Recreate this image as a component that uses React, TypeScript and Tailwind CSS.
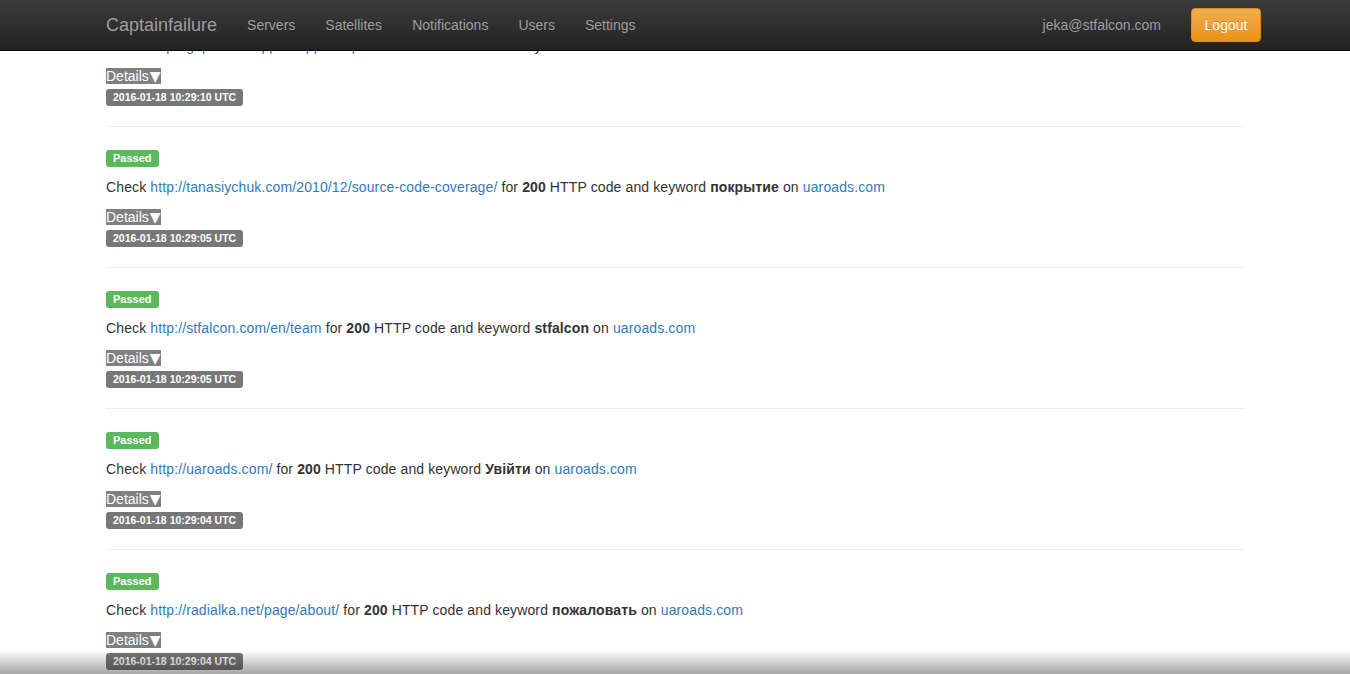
import React from "react";

type Item = {
  url: string;
  keyword: string;
  time: string;
};

const items: Item[] = [
  { url: "http://gopro.ua/support/apps/help/", keyword: "uaroads", time: "2016-01-18 10:29:10 UTC" },
  { url: "http://tanasiychuk.com/2010/12/source-code-coverage/", keyword: "покрытие", time: "2016-01-18 10:29:05 UTC" },
  { url: "http://stfalcon.com/en/team", keyword: "stfalcon", time: "2016-01-18 10:29:05 UTC" },
  { url: "http://uaroads.com/", keyword: "Увійти", time: "2016-01-18 10:29:04 UTC" },
  { url: "http://radialka.net/page/about/", keyword: "пожаловать", time: "2016-01-18 10:29:04 UTC" },
];

function Entry({ item }: { item: Item }) {
  return (
    <div className="pb-[20px]">
      <div className="h-px bg-[#eeeeee]" />
      <div className="mt-[23px] flex h-[17px]">
        <span className="flex h-[17px] items-center rounded-[3px] bg-[#5cb85c] px-[7px] text-[11px] font-bold leading-none text-white">
          Passed
        </span>
      </div>
      <p className="mt-[10px] h-[20px] whitespace-nowrap text-[14px] leading-[20px] tracking-[0.12px] text-[#333333]">
        Check <a className="text-[#337ab7]">{item.url}</a> for <b>200</b> HTTP code and keyword{" "}
        <b>{item.keyword}</b> on <a className="text-[#337ab7]">uaroads.com</a>
      </p>
      <div className="mt-[12px] flex h-[16px]">
        <span className="flex h-[16px] items-center bg-[#808080] text-[14px] leading-[16px] text-white">
          Details
          <span className="pl-[1px] font-['DejaVu_Sans',sans-serif] text-[14px] leading-[16px]">▼</span>
        </span>
      </div>
      <div className="mt-[5px] flex h-[17px]">
        <span className="flex h-[17px] items-center rounded-[3px] bg-[#777777] px-[7px] text-[10.5px] font-bold leading-none text-white">
          {item.time}
        </span>
      </div>
    </div>
  );
}

export default function App() {
  return (
    <div className="relative h-[674px] w-full overflow-hidden bg-white font-['Liberation_Sans',Arial,sans-serif]">
      <div className="mt-[51px] h-[623px] overflow-hidden">
        <main className="mx-auto w-[1140px] -mt-[66px] pl-[1px]">
          {items.map((it, i) => (
            <Entry key={i} item={it} />
          ))}
        </main>
      </div>

      <header className="absolute left-0 right-0 top-0 h-[51px] border-b border-[#080808] bg-linear-to-b from-[#3c3c3c] to-[#222222]">
        <div className="mx-auto flex h-[50px] w-[1170px] items-center">
          <span className="pl-[16px] pr-[15px] text-[18px] leading-[20px] text-[#9d9d9d]">Captainfailure</span>
          <nav className="flex text-[14px] leading-[20px] text-[#9d9d9d]">
            {["Servers", "Satellites", "Notifications", "Users", "Settings"].map((n) => (
              <span key={n} className="px-[15px]">
                {n}
              </span>
            ))}
          </nav>
          <div className="ml-auto -mr-[1px] flex items-center">
            <span className="text-[14px] leading-[20px] text-[#9d9d9d]">jeka@stfalcon.com</span>
            <button className="ml-[30px] h-[34px] w-[70px] rounded-[4px] border border-[#e38d13] bg-linear-to-b from-[#f0ad4e] to-[#eb9316] text-[14px] text-white [text-shadow:0_-1px_0_rgba(0,0,0,0.2)]">
              Logout
            </button>
          </div>
        </div>
      </header>

      <div className="pointer-events-none absolute bottom-0 left-0 right-0 h-[24px] bg-linear-to-b from-white/0 to-black/35" />
    </div>
  );
}
